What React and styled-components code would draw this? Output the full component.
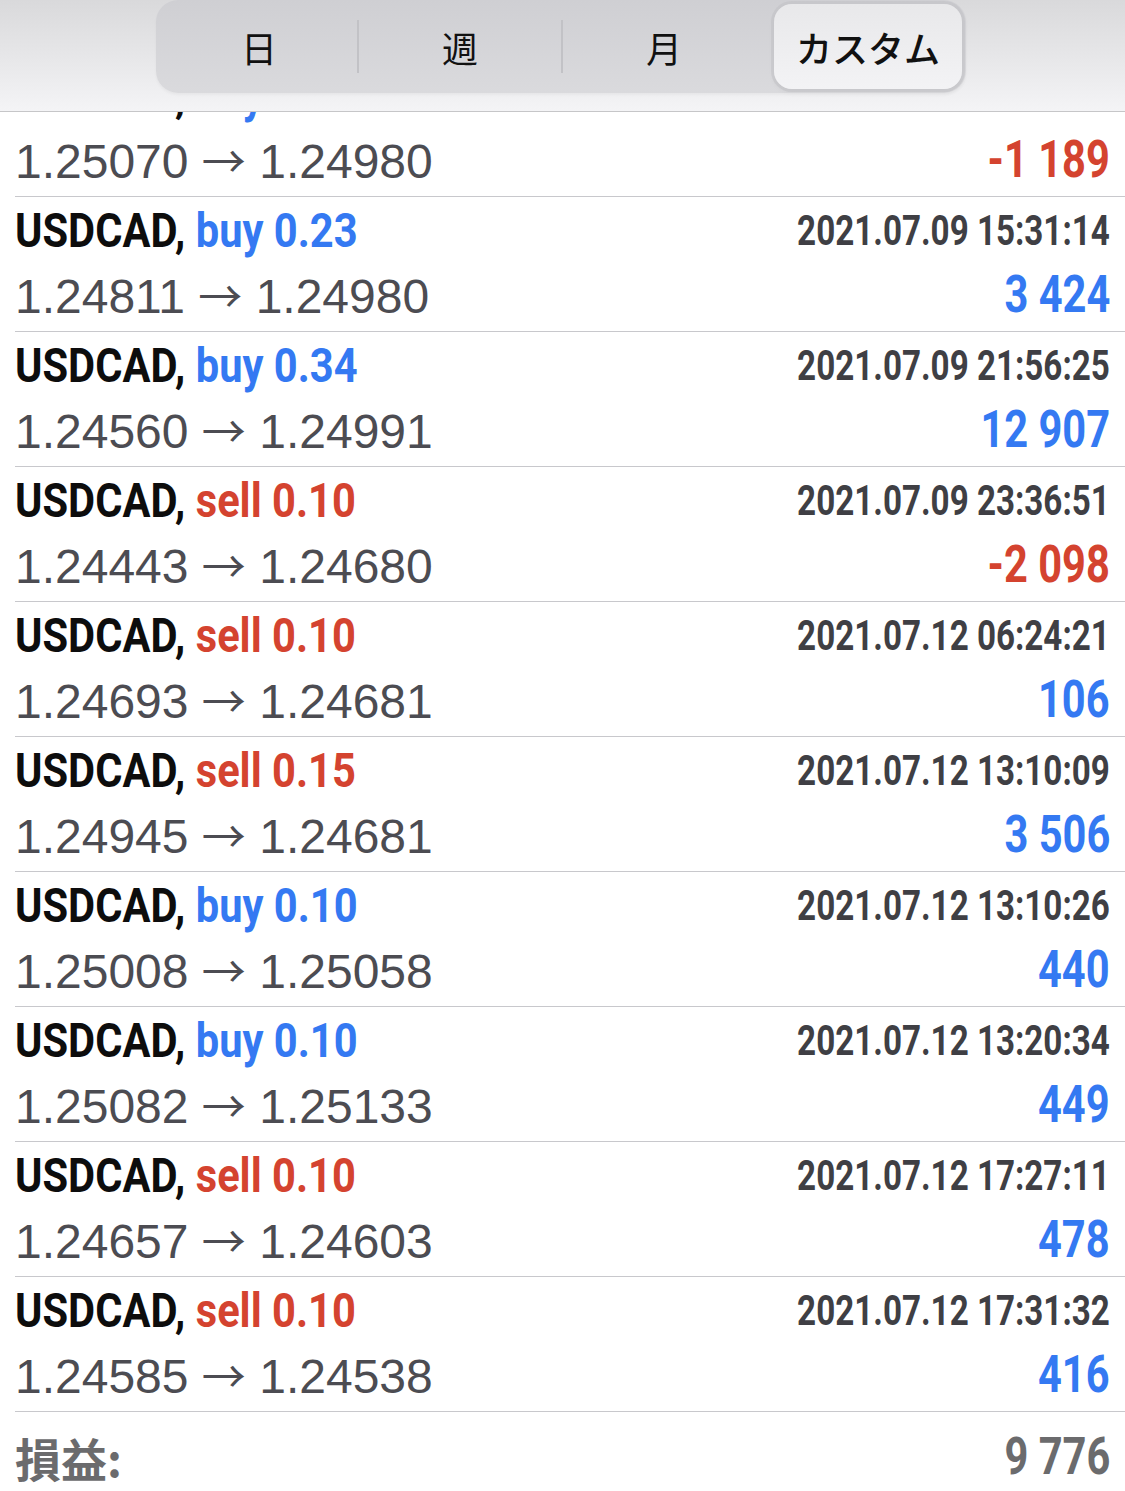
import React from "react";
import styled, { createGlobalStyle } from "styled-components";

const trades = [
  { side: "buy", lot: "0.10", time: "2021.07.09 14:02:47", from: "1.25070", to: "1.24980", profit: "-1 189" },
  { side: "buy", lot: "0.23", time: "2021.07.09 15:31:14", from: "1.24811", to: "1.24980", profit: "3 424" },
  { side: "buy", lot: "0.34", time: "2021.07.09 21:56:25", from: "1.24560", to: "1.24991", profit: "12 907" },
  { side: "sell", lot: "0.10", time: "2021.07.09 23:36:51", from: "1.24443", to: "1.24680", profit: "-2 098" },
  { side: "sell", lot: "0.10", time: "2021.07.12 06:24:21", from: "1.24693", to: "1.24681", profit: "106" },
  { side: "sell", lot: "0.15", time: "2021.07.12 13:10:09", from: "1.24945", to: "1.24681", profit: "3 506" },
  { side: "buy", lot: "0.10", time: "2021.07.12 13:10:26", from: "1.25008", to: "1.25058", profit: "440" },
  { side: "buy", lot: "0.10", time: "2021.07.12 13:20:34", from: "1.25082", to: "1.25133", profit: "449" },
  { side: "sell", lot: "0.10", time: "2021.07.12 17:27:11", from: "1.24657", to: "1.24603", profit: "478" },
  { side: "sell", lot: "0.10", time: "2021.07.12 17:31:32", from: "1.24585", to: "1.24538", profit: "416" },
];

// width of each plain segment, the selected one takes the rest
const periods = [
  { label: "日", width: 198 },
  { label: "週", width: 204 },
  { label: "月", width: 204 },
  { label: "カスタム", active: true },
];

function App() {
  return (
    <>
      <GlobalStyle />
      <Header>
        <Segmented>
          {periods.map((p, i) => (
            <Segment key={p.label} $active={p.active} $width={p.width} $divider={i < 2}>
              {p.label}
            </Segment>
          ))}
        </Segmented>
      </Header>
      <List>
        {trades.map((t, i) => (
          <Row key={i}>
            <Left>
              <Condensed $origin="left" $scale={0.85}>
                <Symbol>USDCAD, </Symbol>
                <Side $sell={t.side === "sell"}>
                  {t.side} {t.lot}
                </Side>
              </Condensed>
              <Prices>
                {t.from} <Arrow>→</Arrow> {t.to}
              </Prices>
            </Left>
            <Right>
              <Time>
                <Condensed $origin="right" $scale={0.79}>{t.time}</Condensed>
              </Time>
              <Profit $loss={t.profit.startsWith("-")}>
                <Condensed $origin="right" $scale={0.8}>{t.profit}</Condensed>
              </Profit>
            </Right>
          </Row>
        ))}
        <Footer>
          <FooterLabel>損益:</FooterLabel>
          <FooterValue>
            <Condensed $origin="right" $scale={0.8}>9 776</Condensed>
          </FooterValue>
        </Footer>
      </List>
    </>
  );
}

// ==========================
// ==== STYLED COMPONENT ====
// ==========================
const GlobalStyle = createGlobalStyle`
  html, body {
    margin: 0;
    padding: 0;
    background: #ffffff;
    overflow: hidden;
  }
  body {
    font-family: Roboto, "Noto Sans CJK JP", sans-serif;
  }
`;

const Header = styled.header`
  position: fixed;
  top: 0;
  left: 0;
  right: 0;
  z-index: 10;
  height: 112px;
  display: flex;
  padding-left: 156px;
  box-sizing: border-box;
  background: linear-gradient(180deg, #d9d9db 0%, #e9e9eb 60%, #f4f4f6 100%);
  border-bottom: 1px solid #c6c6c8;
`;

const Segmented = styled.div`
  display: flex;
  width: 810px;
  height: 93px;
  padding: 4px;
  box-sizing: border-box;
  border-radius: 22px;
  background: linear-gradient(180deg, #cfcfd3 0%, #dadadd 100%);
  box-shadow: 0 2px 3px rgba(0, 0, 0, 0.04);
`;

const Segment = styled.div`
  position: relative;
  flex: ${(p) => (p.$width ? `0 0 ${p.$width}px` : "1")};
  display: flex;
  align-items: center;
  justify-content: center;
  font-family: "Noto Sans CJK JP", sans-serif;
  font-size: 36px;
  font-weight: ${(p) => (p.$active ? 500 : 400)};
  color: #111111;
  margin-left: ${(p) => (p.$active ? "8px" : "0")};
  border-radius: 18px;
  background: ${(p) => (p.$active ? "linear-gradient(180deg, #e8e8ea 0%, #f3f3f5 100%)" : "transparent")};
  box-shadow: ${(p) => (p.$active ? "0 0 0 3px rgba(192,192,196,0.5), 0 3px 6px rgba(0,0,0,0.05)" : "none")};

  &::after {
    content: "";
    display: ${(p) => (p.$divider ? "block" : "none")};
    position: absolute;
    right: -1px;
    top: 16px;
    bottom: 16px;
    width: 2px;
    background: #c2c2c6;
  }
`;

const List = styled.main`
  padding-top: 62px;
  padding-left: 15px;
`;

const Row = styled.section`
  display: flex;
  justify-content: space-between;
  height: 134px;
  padding-right: 15px;
  border-bottom: 1px solid #c8c8cc;
`;

const Left = styled.div`
  display: grid;
  grid-template-rows: 66px 62px;
  align-items: center;
`;

const Right = styled.div`
  display: grid;
  grid-template-rows: 66px 62px;
  align-items: center;
  justify-items: end;
`;

const Condensed = styled.span`
  display: inline-block;
  white-space: nowrap;
  transform: scaleX(${(p) => p.$scale});
  transform-origin: ${(p) => p.$origin} center;
`;

const Symbol = styled.span`
  font-family: Roboto, sans-serif;
  font-weight: 700;
  font-size: 49px;
  color: #0d0d0d;
  white-space: pre;
`;

const Side = styled.span`
  font-family: Roboto, sans-serif;
  font-weight: 700;
  font-size: 49px;
  color: ${(p) => (p.$sell ? "#d4432f" : "#3479f2")};
`;

const Prices = styled.div`
  font-family: "Liberation Sans", Arial, sans-serif;
  font-size: 48px;
  color: #4c4c52;
  white-space: nowrap;
`;

const Arrow = styled.span`
  font-family: "Noto Sans CJK JP", sans-serif;
  font-size: 44px;
`;

const Time = styled.div`
  font-family: Roboto, sans-serif;
  font-weight: 700;
  font-size: 42px;
  color: #3f3f44;
`;

const Profit = styled.div`
  font-family: Roboto, sans-serif;
  font-weight: 700;
  font-size: 52px;
  color: ${(p) => (p.$loss ? "#d4432f" : "#3479f2")};
`;

const Footer = styled.footer`
  display: flex;
  justify-content: space-between;
  align-items: center;
  height: 90px;
  padding-right: 15px;
`;

const FooterLabel = styled.div`
  font-family: "Noto Sans CJK JP", sans-serif;
  font-weight: 700;
  font-size: 46px;
  line-height: 1;
  color: #6b6b6d;
`;

const FooterValue = styled.div`
  font-family: Roboto, sans-serif;
  font-weight: 700;
  font-size: 52px;
  line-height: 1;
  color: #6b6b6d;
`;

export default App;
